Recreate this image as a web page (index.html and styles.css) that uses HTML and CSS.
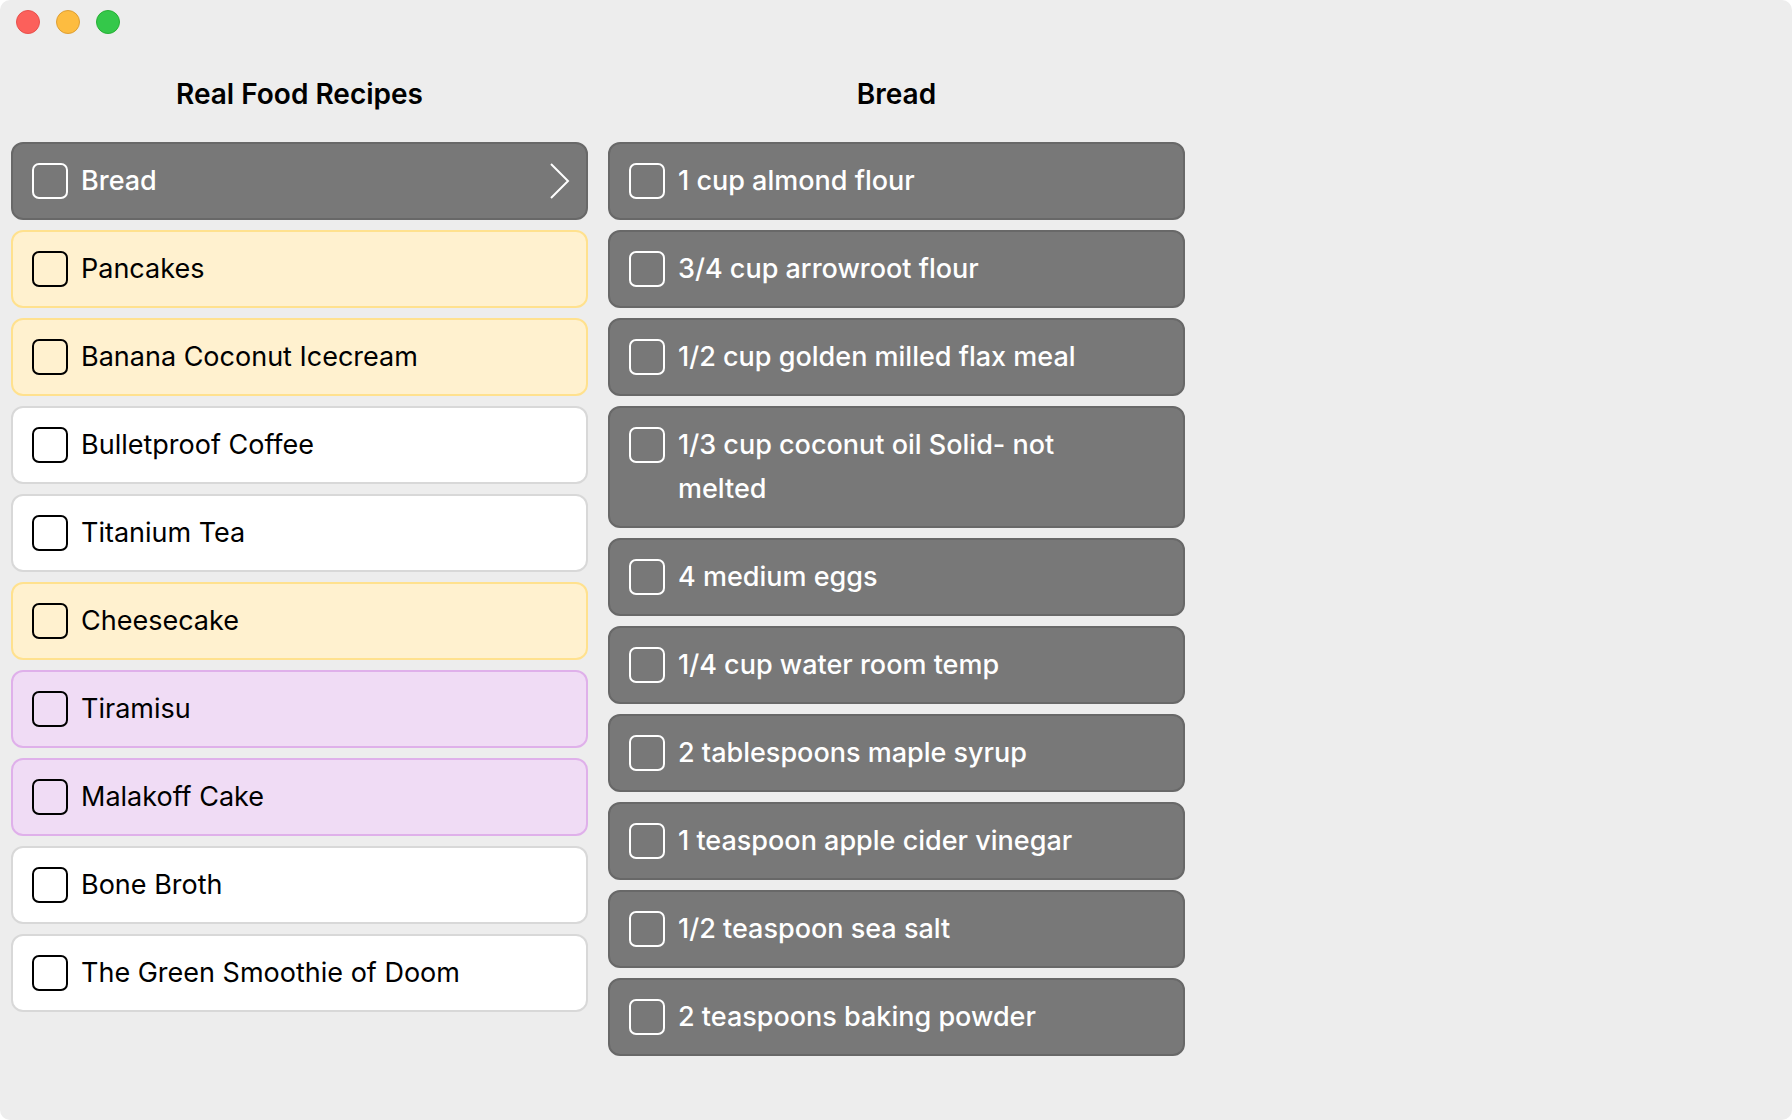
FILE: index.html
```html
<!DOCTYPE html>
<html lang="en">
<head>
<meta charset="utf-8">
<title>Real Food Recipes</title>
<link rel="stylesheet" href="styles.css">
</head>
<body>
<div class="window">
  <header class="titlebar">
    <button class="light close" aria-label="Close"></button>
    <button class="light minimize" aria-label="Minimize"></button>
    <button class="light zoom" aria-label="Zoom"></button>
  </header>
  <main class="columns">
    <section class="column">
      <h2 class="title">Real Food Recipes</h2>
      <ul class="cards">
        <li><label class="card dark"><input class="check" type="checkbox"><span class="text">Bread</span><svg class="chevron" viewBox="0 0 20 36" aria-hidden="true"><path d="M1 1L18 18L1 35"/></svg></label></li>
        <li><label class="card yellow"><input class="check" type="checkbox"><span class="text">Pancakes</span></label></li>
        <li><label class="card yellow"><input class="check" type="checkbox"><span class="text">Banana Coconut Icecream</span></label></li>
        <li><label class="card"><input class="check" type="checkbox"><span class="text">Bulletproof Coffee</span></label></li>
        <li><label class="card"><input class="check" type="checkbox"><span class="text">Titanium Tea</span></label></li>
        <li><label class="card yellow"><input class="check" type="checkbox"><span class="text">Cheesecake</span></label></li>
        <li><label class="card purple"><input class="check" type="checkbox"><span class="text">Tiramisu</span></label></li>
        <li><label class="card purple"><input class="check" type="checkbox"><span class="text">Malakoff Cake</span></label></li>
        <li><label class="card"><input class="check" type="checkbox"><span class="text">Bone Broth</span></label></li>
        <li><label class="card"><input class="check" type="checkbox"><span class="text">The Green Smoothie of Doom</span></label></li>
      </ul>
    </section>
    <section class="column">
      <h2 class="title">Bread</h2>
      <ul class="cards ingredients">
        <li><label class="card dark"><input class="check" type="checkbox"><span class="text">1 cup almond flour</span></label></li>
        <li><label class="card dark"><input class="check" type="checkbox"><span class="text">3/4 cup arrowroot flour</span></label></li>
        <li><label class="card dark"><input class="check" type="checkbox"><span class="text">1/2 cup golden milled flax meal</span></label></li>
        <li><label class="card dark"><input class="check" type="checkbox"><span class="text">1/3 cup coconut oil Solid- not melted</span></label></li>
        <li><label class="card dark"><input class="check" type="checkbox"><span class="text">4 medium eggs</span></label></li>
        <li><label class="card dark"><input class="check" type="checkbox"><span class="text">1/4 cup water room temp</span></label></li>
        <li><label class="card dark"><input class="check" type="checkbox"><span class="text">2 tablespoons maple syrup</span></label></li>
        <li><label class="card dark"><input class="check" type="checkbox"><span class="text">1 teaspoon apple cider vinegar</span></label></li>
        <li><label class="card dark"><input class="check" type="checkbox"><span class="text">1/2 teaspoon sea salt</span></label></li>
        <li><label class="card dark"><input class="check" type="checkbox"><span class="text">2 teaspoons baking powder</span></label></li>
      </ul>
    </section>
  </main>
</div>
</body>
</html>
```
FILE: styles.css
```css
* { box-sizing: border-box; }
html { background: #fff; }
body {
  margin: 0;
  font-family: Inter, "Liberation Sans", sans-serif;
  font-size: 27px;
  line-height: 44px;
  color: #000;
}
.window {
  min-height: 100vh;
  background: #ededed;
  border-radius: 10px;
}
.titlebar {
  display: flex;
  gap: 16px;
  height: 44px;
  padding: 10px 16px;
}
.light {
  width: 24px;
  height: 24px;
  padding: 0;
  border: 1px solid;
  border-radius: 50%;
}
.close { background: #fc605b; border-color: #e8504c; }
.minimize { background: #fdbc40; border-color: #de9f34; }
.zoom { background: #34c84a; border-color: #27b035; }
.columns {
  display: grid;
  grid-template-columns: repeat(3, 1fr);
  padding-left: 1px;
}
.column { padding: 0 10px; }
.title {
  margin: 28px 0 26px;
  font-size: 28px;
  font-weight: 600;
  text-align: center;
}
.cards {
  display: flex;
  flex-direction: column;
  gap: 10px;
  margin: 0;
  padding: 0;
  list-style: none;
}
.card {
  display: flex;
  align-items: flex-start;
  gap: 13px;
  padding: 15px 16px 15px 19px;
  border: 2px solid #d8d8d8;
  border-radius: 12px;
  background: #fff;
}
.yellow { background: #fff1cf; border-color: #ffe18e; }
.purple { background: #f0dcf5; border-color: #dfb0ea; }
.dark {
  background: #787878;
  border-color: #686868;
  color: #fff;
  font-weight: 450;
}
.check {
  appearance: none;
  flex: none;
  width: 36px;
  height: 36px;
  margin: 4px 0;
  border: 2px solid currentColor;
  border-radius: 7px;
  color: inherit;
}
.text { flex: 1; }
.ingredients .text { padding-right: 40px; }
.chevron {
  flex: none;
  width: 20px;
  height: 36px;
  margin: 4px 0;
  fill: none;
  stroke: currentColor;
  stroke-width: 2;
}
```
